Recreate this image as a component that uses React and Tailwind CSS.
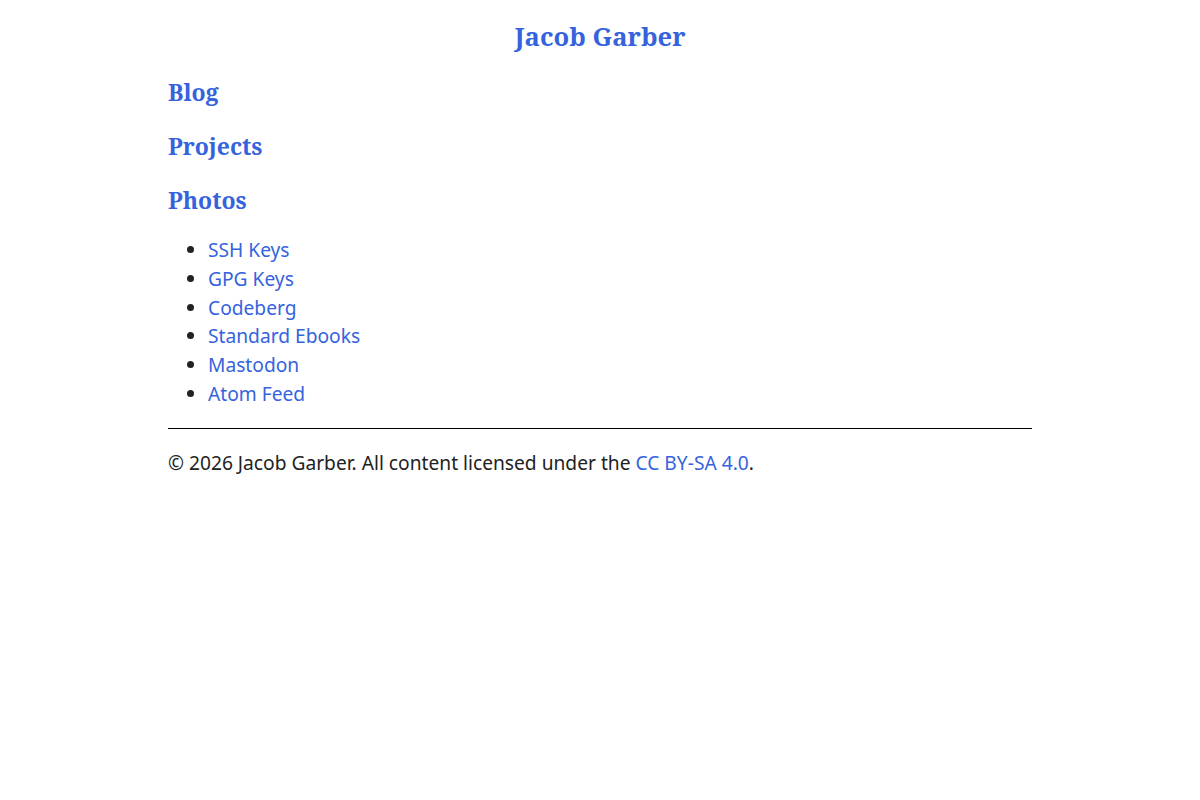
export default function App() {
  const links = ['SSH Keys', 'GPG Keys', 'Codeberg', 'Standard Ebooks', 'Mastodon', 'Atom Feed'];
  return (
    <div className="min-h-screen bg-white text-[#222] font-['Noto_Sans',sans-serif] text-[19.2px] leading-[28.8px]">
      <div className="max-w-[864px] mx-auto">
        <header className="pt-[19px]">
          <h1 className="text-center font-['Noto_Serif','DejaVu_Serif',serif] font-bold text-[25.6px] leading-[36px]">
            <a href="#" className="text-[#3563dd]">Jacob Garber</a>
          </h1>
        </header>
        <nav className="mt-[20px] flex flex-col gap-[20px]">
          {['Blog', 'Projects', 'Photos'].map((t) => (
            <h2 key={t} className="font-['Noto_Serif','DejaVu_Serif',serif] font-bold text-[23px] leading-[34px]">
              <a href="#" className="text-[#3563dd]">{t}</a>
            </h2>
          ))}
        </nav>
        <ul className="list-disc pl-[40px] mt-[19px]">
          {links.map((l) => (
            <li key={l}>
              <a href="#" className="text-[#3563dd]">{l}</a>
            </li>
          ))}
        </ul>
        <hr className="border-0 border-t border-black mt-[19px]" />
        <footer className="mt-[20px]">
          © 2026 Jacob Garber. All content licensed under the{' '}
          <a href="#" className="text-[#3563dd]">CC BY-SA 4.0</a>.
        </footer>
      </div>
    </div>
  );
}
